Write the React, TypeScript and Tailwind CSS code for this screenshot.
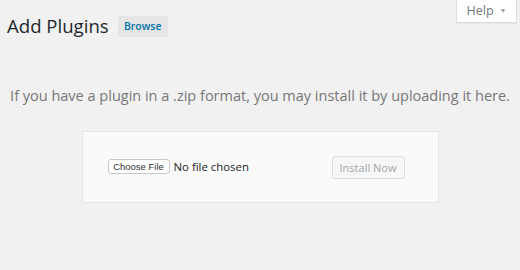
import React from 'react'

const openSans = { fontFamily: '"Open Sans", "Noto Sans", sans-serif' }

const App = () => {
    return (
        <div className='relative w-[520px] h-[270px] overflow-hidden bg-[#f1f1f1]' style={openSans}>
            {/* help tab */}
            <div className='absolute top-0 right-[3px] w-[61px] h-[23px] flex items-center justify-center gap-[6px] bg-white border border-t-0 border-[#dddddd] shadow-[0_1px_1px_rgba(0,0,0,0.04)] text-[12.5px] text-[#72777c]'>
                <span>Help</span>
                <span className='text-[7px] text-[#a0a5aa]'>▼</span>
            </div>

            <div className='flex items-center pt-[13px] pl-[7px]'>
                <h1 className='text-[18.6px] leading-[25px] font-normal text-[#23282d]'>Add Plugins</h1>
                <button className='ml-[9px] mt-[2px] h-[21px] w-[50px] bg-[#e5e5e5] rounded-[2px] text-[10.5px] leading-[21px] font-semibold text-[#0073aa]'>Browse</button>
            </div>

            <p className='mt-[48px] text-center text-[14.5px] leading-[20px] text-[#777777]'>
                If you have a plugin in a .zip format, you may install it by uploading it here.
            </p>

            <div className='mx-auto mt-[25px] w-[357px] h-[72px] flex items-center justify-between pl-[25px] pr-[33px] bg-[#fafafa] border border-[#e5e5e5]'>
                <div className='flex items-center gap-[4px]'>
                    <button
                        className='h-[15px] w-[62px] bg-white border border-[#c8c8c8] rounded-[3px] text-[9.5px] leading-[13px] text-[#333333]'
                        style={{ fontFamily: '"Liberation Sans", Arial, sans-serif' }}
                    >
                        Choose File
                    </button>
                    <span className='text-[11.4px] text-[#222222]'>No file chosen</span>
                </div>
                <button className='h-[23px] w-[73px] bg-[#f7f7f7] border border-[#dddddd] rounded-[3px] text-[11px] leading-[21px] text-[#a0a5aa]'>Install Now</button>
            </div>
        </div>
    )
}

export default App
